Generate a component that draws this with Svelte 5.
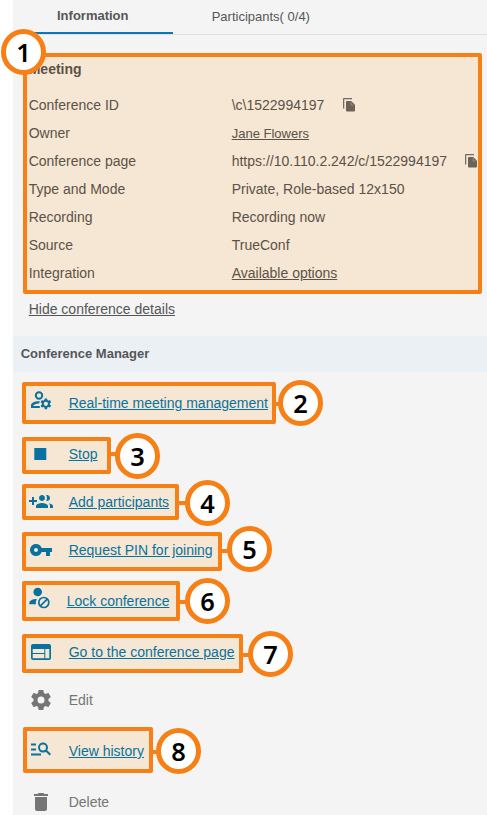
<script>
  const details = [
    { label: 'Conference ID', value: '\\c\\1522994197', copy: true },
    { label: 'Owner', value: 'Jane Flowers', link: true, small: true },
    { label: 'Conference page', value: 'https://10.110.2.242/c/1522994197', copy: true },
    { label: 'Type and Mode', value: 'Private, Role-based 12x150' },
    { label: 'Recording', value: 'Recording now' },
    { label: 'Source', value: 'TrueConf' },
    { label: 'Integration', value: 'Available options', link: true }
  ];

  // gap: space above the row; text/icY/by/line: vertical offsets inside the row
  const actions = [
    { label: 'Real-time meeting management', icon: 'manage', n: 2, gap: 10, w: 254, h: 42, text: 13, icY: 6, bx: 255.5, by: -2, line: 20 },
    { label: 'Stop', icon: 'stop', n: 3, gap: 13, w: 89, h: 37, text: 9, icY: 5, bx: 92.5, by: -4, line: 15 },
    { label: 'Add participants', icon: 'add', n: 4, gap: 10, w: 157, h: 36, text: 10, icY: 5.5, bx: 162.5, by: -4, line: 17 },
    { label: 'Request PIN for joining', icon: 'key', n: 5, gap: 12, w: 200, h: 39, text: 10, icY: 6, bx: 204.5, by: -6, line: 17 },
    { label: 'Lock conference', icon: 'lock', n: 6, gap: 10, w: 158, h: 40, text: 12, icY: 6, bx: 162.5, by: -3, line: 19, shift: -2 },
    { label: 'Go to the conference page', icon: 'page', n: 7, gap: 13, w: 221, h: 39, text: 10, icY: 6, bx: 225.5, by: -3, line: 19 },
    { label: 'Edit', icon: 'gear', gap: 7, w: 150, h: 40, text: 12, icY: 8 },
    { label: 'View history', icon: 'history', n: 8, gap: 7, w: 130, h: 46, text: 16, icY: 9.5, bx: 133.5, by: 1, line: 23, inset: 1 },
    { label: 'Delete', icon: 'trash', gap: 9, w: 150, h: 33, text: 12, icY: 8 }
  ];
</script>

{#snippet glyph(name)}
  <svg width="24" height="24" viewBox="0 0 24 24" fill="currentColor">
    {#if name === 'manage'}
      <circle cx="10" cy="7.500" r="3.200" fill="none" stroke="currentColor" stroke-width="2" />
      <path d="M10.900 13.300C7 12.900 2 14.500 2 17.300V20h8.800v-2H4.200c.2-1.200 3.200-2.500 5.900-2.500z" />
      <g transform="translate(9.200 8.600) scale(.6)">
        <path d="M19.400 13c.1-.6.1-1.400 0-2l2.200-1.700-2-3.500-2.600 1c-.6-.4-1.100-.8-1.800-1L14.800 3h-4l-.4 2.800c-.7.2-1.200.6-1.800 1l-2.600-1-2 3.500L6.200 11c-.1.6-.1 1.400 0 2L4 14.700l2 3.500 2.600-1c.6.4 1.100.8 1.800 1l.4 2.800h4l.4-2.800c.7-.2 1.200-.6 1.800-1l2.600 1 2-3.500zM12.800 15.500a3.500 3.500 0 1 1 0-7 3.500 3.500 0 0 1 0 7z" fill-rule="evenodd" />
      </g>
    {:else if name === 'stop'}
      <path d="M5.300 6h12v12h-12z" />
    {:else if name === 'add'}
      <path d="M8 10H5V7H3v3H0v2h3v3h2v-3h3zM18 11c1.660 0 2.990-1.340 2.990-3S19.660 5 18 5c-.32 0-.63.05-.91.14.57.81.9 1.790.9 2.860s-.34 2.040-.9 2.860c.28.09.59.14.91.14zM13 11c1.660 0 2.990-1.340 2.990-3S14.660 5 13 5c-1.660 0-3 1.340-3 3s1.340 3 3 3zM19.620 13.160c.83.73 1.380 1.660 1.380 2.840v2h3v-2c0-1.540-2.370-2.490-4.380-2.840zM13 13c-2 0-6 1-6 3v2h12v-2c0-2-4-3-6-3z" />
    {:else if name === 'key'}
      <path d="M12.650 10A6 6 0 0 0 7 6c-3.310 0-6 2.690-6 6s2.690 6 6 6a6 6 0 0 0 5.650-4H17v4h4v-4h2v-4zM7 14a2 2 0 1 1 0-4 2 2 0 0 1 0 4z" />
    {:else if name === 'lock'}
      <circle cx="8.700" cy="5" r="4.300" />
      <path d="M.3 17.300v-1.100C.3 13.400 4 12 7.800 12a8 8 0 0 0-.8 5.300z" />
      <circle cx="14.800" cy="15.500" r="5" fill="none" stroke="currentColor" stroke-width="1.700" />
      <path d="m11.400 18.900 6.800-6.800" stroke="currentColor" stroke-width="1.700" />
    {:else if name === 'page'}
      <path fill-rule="evenodd" d="M4 4h16a2 2 0 0 1 2 2v12a2 2 0 0 1-2 2H4a2 2 0 0 1-2-2V6c0-1.100.9-2 2-2zm-.3 5v4h11.600V9zm0 5v4.200h11.600V14zM16.300 9v9.200h4V9z" />
    {:else if name === 'gear'}
      <path d="M19.430 12.980c.04-.32.07-.64.07-.98s-.03-.66-.07-.98l2.110-1.650c.19-.15.24-.42.12-.64l-2-3.460c-.12-.22-.39-.3-.61-.22l-2.490 1c-.52-.4-1.080-.73-1.690-.98l-.38-2.650A.49.49 0 0 0 14 2h-4c-.25 0-.46.18-.49.42l-.38 2.650c-.61.25-1.170.59-1.690.98l-2.490-1c-.23-.09-.49 0-.61.22l-2 3.460c-.13.22-.07.49.12.64l2.110 1.650c-.04.32-.07.65-.07.98s.03.66.07.98l-2.110 1.650c-.19.15-.24.42-.12.64l2 3.460c.12.22.39.3.61.22l2.490-1c.52.4 1.080.73 1.690.98l.38 2.650c.03.24.24.42.49.42h4c.25 0 .46-.18.49-.42l.38-2.650c.61-.25 1.170-.59 1.690-.98l2.490 1c.23.09.49 0 .61-.22l2-3.460c.12-.22.07-.49-.12-.64zM12 15.500a3.500 3.500 0 1 1 0-7 3.500 3.500 0 0 1 0 7z" />
    {:else if name === 'history'}
      <path d="M7 9H2V7h5zm0 3H2v2h5zm13.590 7-3.830-3.830A5 5 0 1 1 18.170 13.750L22 17.590zM17 11a3 3 0 1 0-6 0 3 3 0 0 0 6 0zM2 19h10v-2H2z" transform="translate(0 -.5)" />
    {:else if name === 'trash'}
      <path d="M6 19c0 1.100.9 2 2 2h8c1.100 0 2-.9 2-2V7H6zM19 4h-3.500l-1-1h-5l-1 1H5v2h14z" />
    {/if}
  </svg>
{/snippet}

<div class="page">
  <nav>
    <span class="tab active">Information</span>
    <span class="tab">Participants( 0/4)</span>
  </nav>

  <section class="meeting">
    <h3>Meeting</h3>
    {#each details as d}
      <div class="detail">
        <span class="label">{d.label}</span>
        <span class="value" class:link={d.link} class:small={d.small}>{d.value}</span>
        {#if d.copy}
          <svg class="copy" width="12" height="14" viewBox="0 0 12 14">
            <path d="M.6 10.500V1.200Q.6.600 1.200.600H9" fill="none" stroke="#746a5f" stroke-width="1.300" />
            <path d="M4 3h4.200L12 6.800V12.500q0 1-1 1H4Q3 13.500 3 12.500V4q0-1 1-1z" fill="#6b6258" />
            <path d="M8 4v3h3" fill="none" stroke="#a89c8e" stroke-width=".7" />
          </svg>
        {/if}
      </div>
    {/each}
    <span class="badge" style="left:-26.500px;top:-28px"><b>1</b></span>
  </section>

  <div class="hide"><span>Hide conference details</span></div>
  <h2>Conference Manager</h2>

  <div class="actions">
    {#each actions as a}
      <div
        class="action"
        class:marked={a.n}
        style="margin-top:{a.gap}px;margin-left:{a.inset ?? 0}px;width:{a.w}px;height:{a.h}px"
      >
        <span class="icon" style="margin-top:{a.icY}px;margin-left:{6.7 - (a.inset ?? 0)}px">{@render glyph(a.icon)}</span>
        <span class="text" style="margin-top:{a.text}px;margin-left:{16 + (a.shift ?? 0)}px">{a.label}</span>
        {#if a.n}
          <i class="wire" style="top:{a.line}px"></i>
          <span class="badge" style="left:{a.bx - (a.inset ?? 0)}px;top:{a.by}px"><b>{a.n}</b></span>
        {/if}
      </div>
    {/each}
  </div>
</div>

<style>
  :global(body) { background: #fff; overflow: hidden; }
  .page {
    box-sizing: border-box;
    height: 815px;
    margin-left: 13px;
    background: #f4f4f4;
    color: #565656;
    font: 14px/16px "Liberation Sans", Arial, sans-serif;
  }
  nav { display: flex; height: 35px; box-sizing: border-box; border-bottom: 1px solid #e0e0e0; font-size: 13px; }
  .tab { box-sizing: border-box; height: 35px; padding: 9px 38px 0 38.700px; white-space: pre; }
  .active { width: 160px; height: 34px; padding: 8px 0 0 44px; border-bottom: 2px solid #0a78b5; font-weight: bold; }
  .meeting {
    position: relative;
    box-sizing: border-box;
    width: 459px;
    height: 241px;
    margin: 18px 0 0 10px;
    padding: 4px 0 0 1.700px;
    border: 4px solid #f68016;
    border-radius: 2px;
    background: #f6e7d4;
    color: #5b5248;
  }
  h3 { margin: 0 0 14px; font-size: 14px; line-height: 16px; height: 16px; }
  .detail { display: flex; align-items: center; height: 28px; white-space: nowrap; }
  .label { width: 203px; flex: none; }
  .link { text-decoration: underline; }
  .small { font-size: 13px; padding-top: 1px; }
  .copy { flex: none; margin-left: 18.300px; }
  .hide { height: 42px; padding: 7px 0 0 15.700px; box-sizing: border-box; text-decoration: underline; }
  h2 { margin: 0; height: 36px; padding-left: 7.700px; background: #ebf0f5; font-size: 13px; line-height: 35px; }
  .actions { display: flex; flex-direction: column; align-items: flex-start; padding-left: 9px; }
  .action { position: relative; display: flex; align-items: flex-start; box-sizing: border-box; flex: none; color: #757575; white-space: nowrap; }
  .marked {
    color: #0772a0;
    background: #f6e7d4;
    box-shadow: inset 0 0 0 4px #f68016;
    border-radius: 2px;
  }
  .marked .text { text-decoration: underline; }
  .icon { display: flex; flex: none; width: 24px; height: 24px; }
  .wire { position: absolute; left: 100%; width: 8px; height: 4px; background: #f68016; }
  .badge {
    position: absolute;
    box-sizing: border-box;
    width: 45.500px;
    height: 46px;
    border: 5px solid #f68016;
    border-radius: 50%;
    background: #fff;
    color: #000;
    font: 600 24px/38px "Noto Sans", "Open Sans", sans-serif;
    text-align: center;
  }
  .badge b { display: block; font-weight: 600; transform: translateX(-.3px) scale(1.06, 1.02); }
</style>
